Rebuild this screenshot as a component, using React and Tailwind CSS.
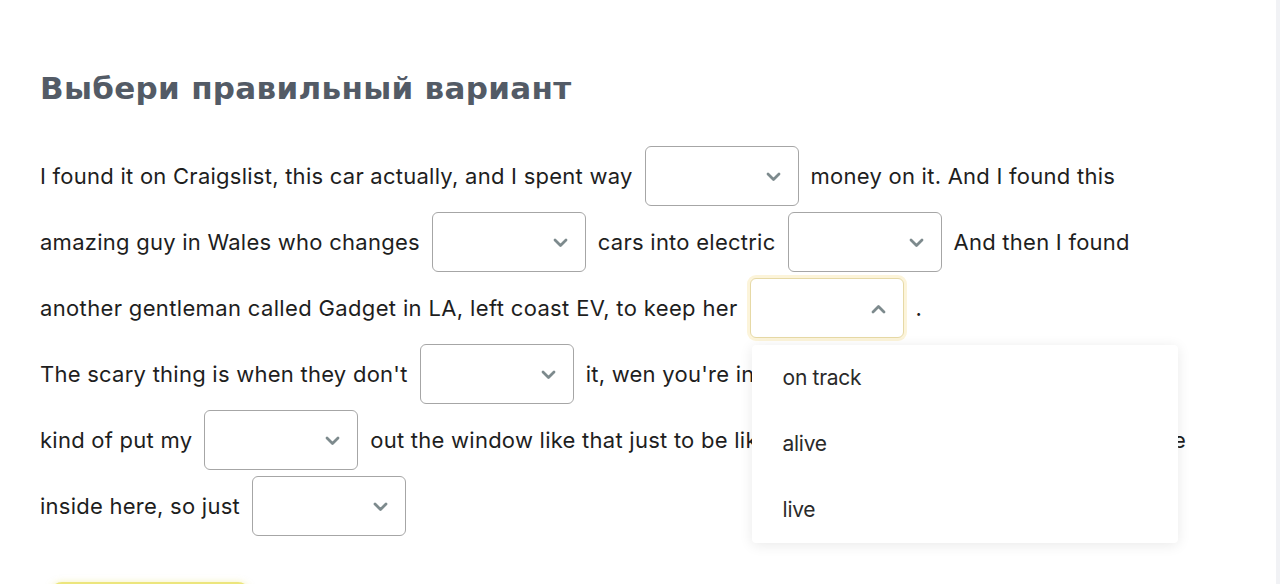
const font = { fontFamily: 'Inter, "Noto Sans", sans-serif' }

function Chevron({ up }) {
  return (
    <svg
      className="absolute right-[17px] top-[25px] w-[15px] h-[10px]"
      viewBox="0 0 15 10"
      fill="none"
      stroke="#7d8a8d"
      strokeWidth="2.8"
      strokeLinecap="round"
      strokeLinejoin="round"
    >
      {up ? <polyline points="2,8 7.5,2.5 13,8" /> : <polyline points="2,2 7.5,7.5 13,2" />}
    </svg>
  )
}

function Select({ open }) {
  return (
    <div
      className={
        'relative shrink-0 w-[154px] h-[60px] rounded-md bg-white border ' +
        (open ? 'border-[#e6d9a6] ring-[3px] ring-[#fcf4da]' : 'border-[#a6a6a6]')
      }
    >
      <Chevron up={open} />
      {open && (
        <div className="absolute left-[1px] top-[66px] w-[426px] rounded bg-white shadow-[0_2px_14px_rgba(0,0,0,0.09)] z-10">
          {['on track', 'alive', 'live'].map(o => (
            <div key={o} className="h-[66px] flex items-center pl-[31px] text-[21px] text-[#2a2a2a] tracking-[-0.3px]">
              {o}
            </div>
          ))}
        </div>
      )}
    </div>
  )
}

function Row({ children }) {
  return <div className="h-[66px] w-[1146px] flex items-center gap-3 whitespace-nowrap">{children}</div>
}

export default function App() {
  return (
    <div className="w-full h-[584px] overflow-hidden bg-white flex" style={font}>
      <div className="flex-1 pl-10 pt-[70px]">
        <h2
          className="text-[31px] leading-9 font-bold text-[#535b66] tracking-[0.3px]"
          style={{ fontFamily: '"DejaVu Sans", sans-serif' }}
        >
          Выбери правильный вариант
        </h2>
        <div className="mt-[37px] text-[22px] text-[#1e1e1e] tracking-[0.25px]">
          <Row>
            <span>I found it on Craigslist, this car actually, and I spent way</span>
            <Select />
            <span>money on it. And I found this</span>
          </Row>
          <Row>
            <span>amazing guy in Wales who changes</span>
            <Select />
            <span>cars into electric</span>
            <Select />
            <span>And then I found</span>
          </Row>
          <Row>
            <span className="tracking-[0.35px]">another gentleman called Gadget in LA, left coast EV, to keep her</span>
            <Select open />
            <span>.</span>
          </Row>
          <Row>
            <span>The scary thing is when they don't</span>
            <Select />
            <span>it, wen you're in the car, you know, and you have to</span>
          </Row>
          <Row>
            <span>kind of put my</span>
            <Select />
            <span>out the window like that just to be like, hey, I'm still in here,</span>
            <span className="ml-auto">I'm alive</span>
          </Row>
          <Row>
            <span>inside here, so just</span>
            <Select />
          </Row>
        </div>
        <button className="mt-[43px] ml-[10px] w-[200px] h-12 rounded-xl bg-[#ece57c] shadow-[0_0_6px_rgba(236,229,124,0.5)]"></button>
      </div>
      <div className="w-[4px] shrink-0 bg-[#f1f2f5]"></div>
    </div>
  )
}
